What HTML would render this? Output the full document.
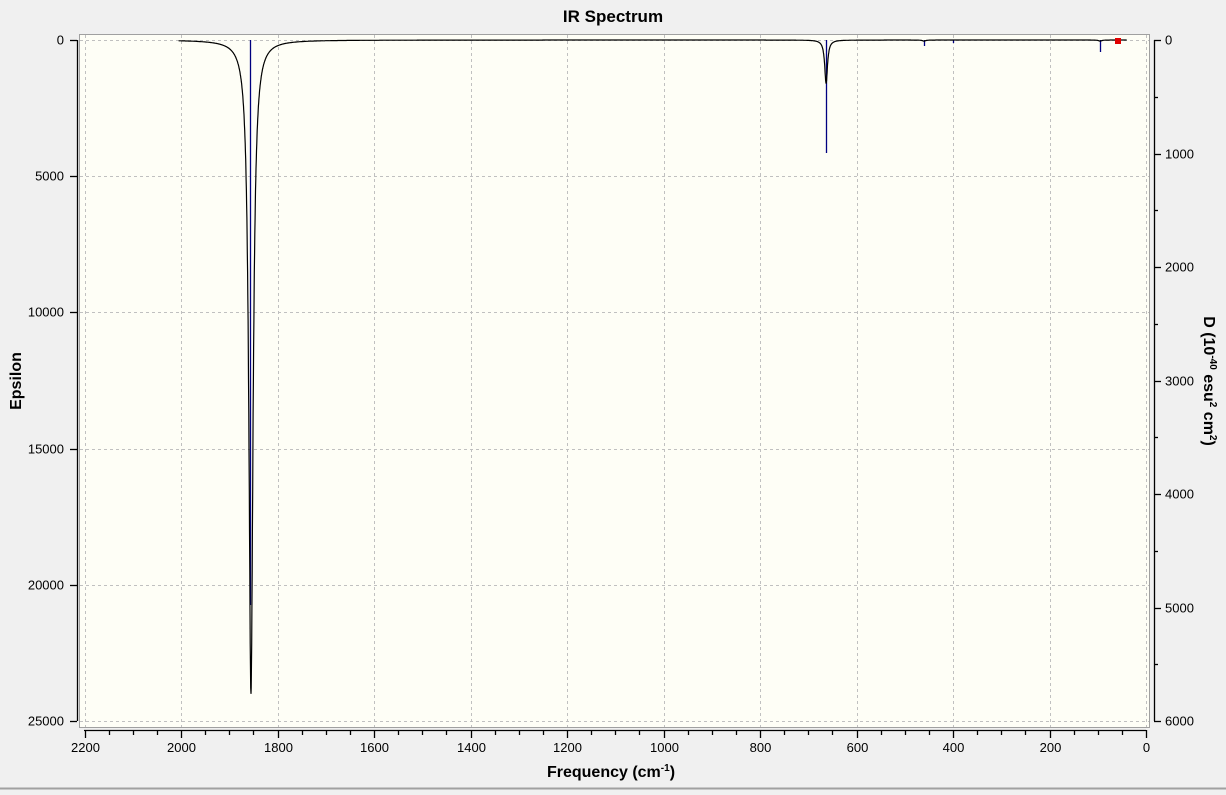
<!DOCTYPE html>
<html><head><style>
body{margin:0;background:#f0f0f0;width:1226px;height:790px;overflow:hidden;font-family:"Liberation Sans",sans-serif;}
</style></head><body>
<svg id="s" width="1226" height="790" xmlns="http://www.w3.org/2000/svg" font-family="Liberation Sans, sans-serif">
<rect x="0" y="0" width="1226" height="790" fill="#f0f0f0"/>
<line x1="0" y1="788.5" x2="1226" y2="788.5" stroke="#a0a0a0" stroke-width="2"/>
<text x="613" y="22" text-anchor="middle" font-size="17" font-weight="bold" fill="#000">IR Spectrum</text>
<rect x="79.5" y="34.5" width="1070" height="693" fill="#fefef6" stroke="#a0a0a0"/>
<g id="grid" stroke="#c0c0c0" stroke-dasharray="3,3" stroke-width="1"></g>
<g id="axes" stroke="#000" stroke-width="1.3" fill="none"></g>
<g id="labels" font-size="13" fill="#000"></g>
<text x="611" y="777" text-anchor="middle" font-size="16" font-weight="bold">Frequency (cm<tspan font-size="10" dy="-6">-1</tspan><tspan dy="6">)</tspan></text>
<text transform="translate(21,381) rotate(-90)" text-anchor="middle" font-size="16" font-weight="bold">Epsilon</text>
<text transform="translate(1204,381) rotate(90)" text-anchor="middle" font-size="16" font-weight="bold">D (10<tspan font-size="10" dy="-6">-40</tspan><tspan dy="6"> esu</tspan><tspan font-size="10" dy="-6">2</tspan><tspan dy="6"> cm</tspan><tspan font-size="10" dy="-6">2</tspan><tspan dy="6">)</tspan></text>
<g id="sticks" stroke="#000080" stroke-width="1.3"></g>
<path id="curve" fill="none" stroke="#000" stroke-width="1.2"/>
<rect x="1115" y="38" width="6" height="6" fill="#e00000"/>
</svg>
<script>
var NS="http://www.w3.org/2000/svg";
function X(f){return 1146-f*(1146-84.5)/2200;}
function Y(e){return 40+e*(681/25000);}
function el(p,t,a,txt){var e=document.createElementNS(NS,t);for(var k in a)e.setAttribute(k,a[k]);if(txt!=null)e.textContent=txt;document.getElementById(p).appendChild(e);}
for(var f=0;f<=2200;f+=200){var x=Math.round(X(f))+.5;el("grid","line",{x1:x,y1:35,x2:x,y2:727});
 el("labels","text",{x:x,y:752,"text-anchor":"middle"},f);}
for(var e=0;e<=25000;e+=5000){var y=Math.round(Y(e))+.5;el("grid","line",{x1:80,y1:y,x2:1149,y2:y});
 el("labels","text",{x:64,y:y+4,"text-anchor":"end"},e);
 el("axes","line",{x1:70,y1:y,x2:77,y2:y});}
el("axes","line",{x1:77.5,y1:40,x2:77.5,y2:721});
el("axes","line",{x1:84,y1:730.5,x2:1146,y2:730.5});
for(var f=0;f<=2200;f+=50){var x=Math.round(X(f))+.5;el("axes","line",{x1:x,y1:730,x2:x,y2:f%200==0?738:735});}
el("axes","line",{x1:1154.5,y1:40,x2:1154.5,y2:721});
for(var d=0;d<=6000;d+=1000){var y=Math.round(40+d*681/6000)+.5;el("axes","line",{x1:1154,y1:y,x2:1161,y2:y});
 el("labels","text",{x:1165,y:y+4},d);}
for(var d=500;d<6000;d+=1000){var y=Math.round(40+d*681/6000)+.5;el("axes","line",{x1:1154,y1:y,x2:1158,y2:y});}
var pk=[[1855,24000,5.2],[663,1600,3.5],[95,40,4],[460,40,4]];
var pts=[];
for(var f=2005;f>=40;f-=0.5){var s=0;pk.forEach(function(p){var d=f-p[0];s+=p[1]*p[2]*p[2]/(p[2]*p[2]+d*d);});pts.push(X(f).toFixed(1)+","+Y(s).toFixed(1));}
document.getElementById("curve").setAttribute("d","M"+pts.join("L"));
[[1857,605],[663,153],[95,52],[460,46],[400,43]].forEach(function(s){var x=Math.round(X(s[0]))+.5;el("sticks","line",{x1:x,y1:40,x2:x,y2:s[1]});});
</script>
</body></html>
